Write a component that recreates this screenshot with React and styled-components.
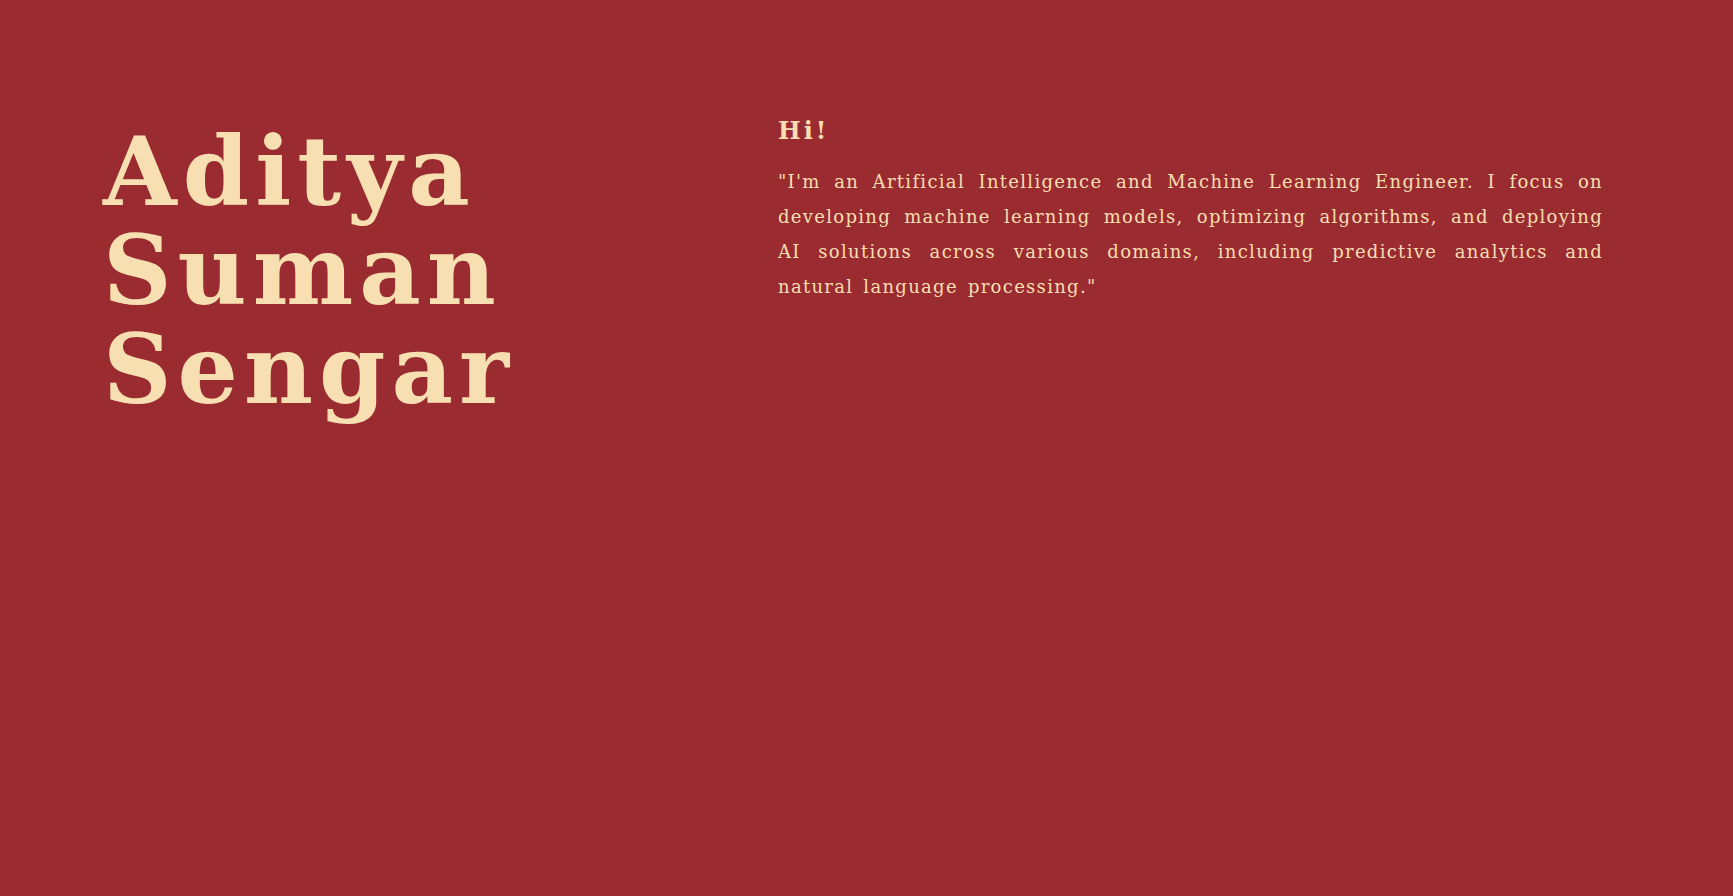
import React from 'react';
import styled, { createGlobalStyle } from 'styled-components';

const GlobalStyle = createGlobalStyle`
  html, body {
    margin: 0;
    padding: 0;
    background: #9a2c31;
  }
`;

const Page = styled.main`
  min-height: 100vh;
  box-sizing: border-box;
  background: #9a2c31;
  color: #f8dfb1;
  font-family: "DejaVu Serif", serif;
  display: grid;
  grid-template-columns: 675px 1fr;
  align-items: start;
  padding: 116px 130px 0 103px;
`;

const Name = styled.h1`
  margin: 6px 0 0;
  font-size: 95px;
  line-height: 99px;
  font-weight: 700;
  letter-spacing: 6px;
`;

const Intro = styled.section`
  display: flex;
  flex-direction: column;
  gap: 19px;
`;

const Greeting = styled.h2`
  margin: 0;
  font-size: 24px;
  font-weight: 700;
  letter-spacing: 3px;
`;

const Bio = styled.p`
  margin: 0;
  font-size: 18px;
  line-height: 35px;
  letter-spacing: 1.3px;
  word-spacing: 3px;
  text-align: justify;
`;

const Line = styled.span`
  display: block;
  white-space: nowrap;
  text-align-last: ${(p) => (p.$last ? 'left' : 'justify')};
`;

const bioLines = [
  '"I\'m an Artificial Intelligence and Machine Learning Engineer. I focus on',
  'developing machine learning models, optimizing algorithms, and deploying',
  'AI solutions across various domains, including predictive analytics and',
  'natural language processing."',
];

export default function App() {
  return (
    <>
      <GlobalStyle />
      <Page>
        <Name>
          Aditya
          <br />
          Suman
          <br />
          Sengar
        </Name>
        <Intro>
          <Greeting>Hi!</Greeting>
          <Bio>
            {bioLines.map((line, i) => (
              <Line key={i} $last={i === bioLines.length - 1}>
                {line}{' '}
              </Line>
            ))}
          </Bio>
        </Intro>
      </Page>
    </>
  );
}
